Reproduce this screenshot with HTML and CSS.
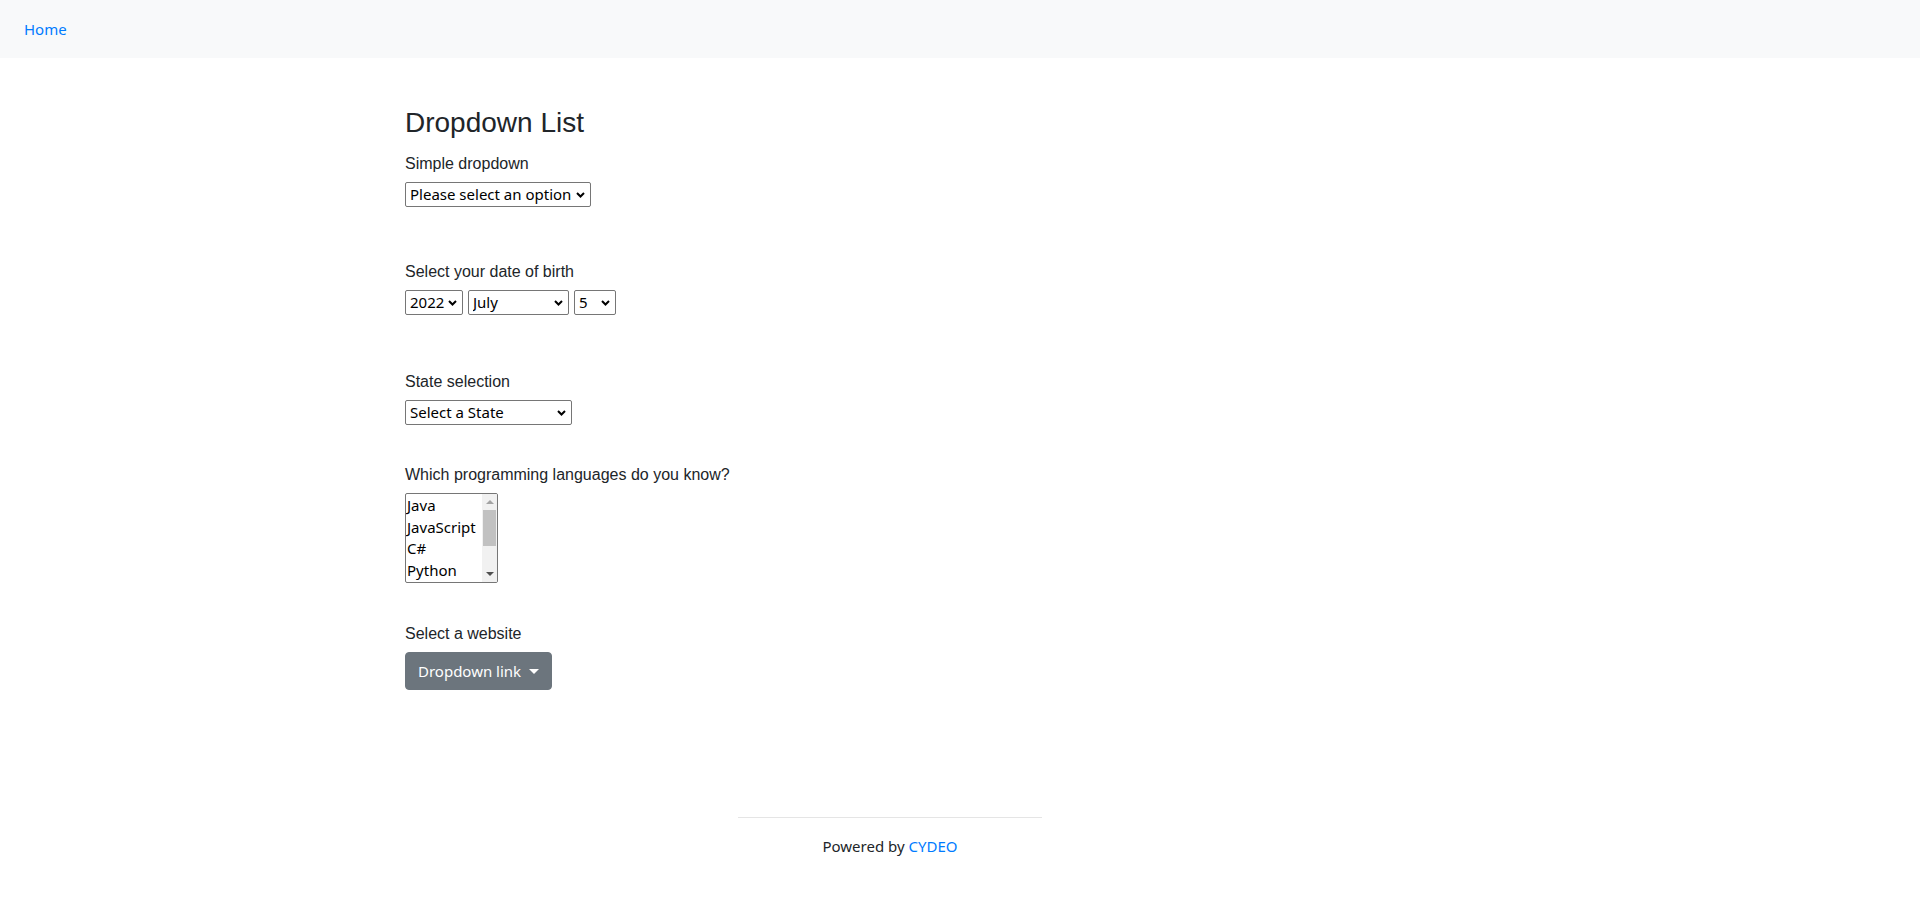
FILE: index.html
```html
<!DOCTYPE html>
<html lang="en">
<head>
<meta charset="utf-8">
<title>Dropdown List</title>
<link rel="stylesheet" href="styles.css">
</head>
<body>
<nav class="navbar"><a class="nav-link" href="#">Home</a></nav>
<div class="container">
  <div class="example">
    <h3 class="title">Dropdown List</h3>

    <div class="group g-simple">
      <label class="lbl" for="dropdown">Simple dropdown</label>
      <select id="dropdown" class="sel sel-simple"><option>Please select an option</option></select>
    </div>

    <div class="group g-date">
      <label class="lbl">Select your date of birth</label>
      <div class="date-row">
        <select class="sel sel-year"><option>2022</option></select>
        <select class="sel sel-month"><option>July</option></select>
        <select class="sel sel-day"><option>5</option></select>
      </div>
    </div>

    <div class="group g-state">
      <label class="lbl" for="state">State selection</label>
      <select id="state" class="sel sel-state"><option>Select a State</option></select>
    </div>

    <div class="group g-lang">
      <label class="lbl">Which programming languages do you know?</label>
      <div class="listbox" role="listbox" aria-multiselectable="true">
        <ul class="options">
          <li role="option">Java</li>
          <li role="option">JavaScript</li>
          <li role="option">C#</li>
          <li role="option">Python</li>
        </ul>
        <div class="scrollbar">
          <span class="arrow arrow-up"></span>
          <span class="thumb"></span>
          <span class="track-fill"></span>
          <span class="arrow arrow-down"></span>
        </div>
      </div>
    </div>

    <div class="group g-web">
      <label class="lbl">Select a website</label>
      <button class="btn-dropdown" type="button">Dropdown link<span class="caret"></span></button>
    </div>
  </div>
</div>

<footer class="footer">
  <hr class="footer-rule">
  <div class="footer-text">Powered by <a class="footer-link" href="#">CYDEO</a></div>
</footer>
</body>
</html>
```

FILE: styles.css
```css
* { box-sizing: border-box; }

html, body {
  margin: 0;
  padding: 0;
  background: #ffffff;
}

body {
  font-family: "Liberation Sans", Arial, sans-serif;
  font-size: 16px;
  line-height: 1.5;
  color: #212529;
}

.navbar {
  height: 58px;
  background: #f8f9fa;
  display: flex;
  align-items: center;
  padding-left: 24px;
}

.nav-link {
  font-family: "Noto Sans", sans-serif;
  font-size: 15px;
  color: #007bff;
  text-decoration: none;
}

.container {
  max-width: 1140px;
  margin: 0 auto;
  padding: 0 15px;
}

.example {
  padding-top: 48px;
  display: flex;
  flex-direction: column;
  align-items: flex-start;
}

.title {
  margin: 0 0 12px;
  font-size: 28px;
  font-weight: 400;
  line-height: 34px;
}

.group {
  display: flex;
  flex-direction: column;
  align-items: flex-start;
}

.g-date { margin-top: 53px; }
.g-state { margin-top: 55px; }
.g-lang { margin-top: 38px; }
.g-web { margin-top: 39px; }

.lbl {
  display: block;
  line-height: 24px;
  margin-bottom: 6px;
}

.sel {
  -webkit-appearance: none;
  appearance: none;
  height: 25px;
  margin: 0;
  padding: 0 13px 0 4px;
  border: 1px solid #767676;
  border-radius: 2px;
  background-color: #ffffff;
  background-image: url("data:image/svg+xml,%3Csvg xmlns='http://www.w3.org/2000/svg' width='9' height='6' viewBox='0 0 9 6'%3E%3Cpath d='M1 1l3.5 3.5 3.5-3.5' fill='none' stroke='%23000' stroke-width='2'/%3E%3C/svg%3E");
  background-repeat: no-repeat;
  background-position: right 5px center;
  background-size: 9px 6px;
  font-family: "Noto Sans", sans-serif;
  font-size: 15px;
  line-height: 21px;
  color: #000000;
}

.sel-simple { width: 186px; }
.sel-year { width: 58px; }
.sel-month { width: 101px; }
.sel-day { width: 42px; }
.sel-state { width: 167px; }

.date-row {
  display: flex;
  gap: 5px;
}

.listbox {
  display: flex;
  width: 93px;
  height: 90px;
  border: 1px solid #767676;
  border-radius: 2px;
  background: #ffffff;
  overflow: hidden;
}

.options {
  list-style: none;
  margin: 0;
  padding: 1px 0 0 1px;
  flex: 1;
  overflow: hidden;
  font-family: "Noto Sans", sans-serif;
  font-size: 15px;
  line-height: 21.5px;
  color: #000000;
  white-space: nowrap;
}

.scrollbar {
  width: 15px;
  flex: none;
  background: #f1f1f1;
  display: flex;
  flex-direction: column;
  align-items: center;
}

.arrow {
  display: block;
  width: 0;
  height: 0;
  border-left: 4px solid transparent;
  border-right: 4px solid transparent;
}

.arrow-up {
  margin-top: 6px;
  border-bottom: 4px solid #a3a3a3;
}

.thumb {
  display: block;
  width: 13px;
  height: 36px;
  margin-top: 6px;
  background: #c1c1c1;
}

.track-fill { flex: 1; }

.arrow-down {
  margin-bottom: 6px;
  border-top: 4px solid #505050;
}

.btn-dropdown {
  display: inline-flex;
  align-items: center;
  height: 38px;
  padding: 0 12px;
  border: 1px solid #6c757d;
  border-radius: 4px;
  background: #6c757d;
  color: #ffffff;
  font-family: "Noto Sans", sans-serif;
  font-size: 15px;
  line-height: 24px;
  cursor: pointer;
}

.caret {
  display: inline-block;
  margin-left: 8px;
  width: 0;
  height: 0;
  border-top: 5px solid #ffffff;
  border-left: 5px solid transparent;
  border-right: 5px solid transparent;
}

.footer {
  width: 304px;
  margin: 127px 0 0 calc(50% - 222px);
}

.footer-rule {
  margin: 0;
  border: 0;
  border-top: 1px solid rgba(0, 0, 0, 0.1);
}

.footer-text {
  margin-top: 16px;
  text-align: center;
  font-family: "Noto Sans", sans-serif;
  font-size: 15px;
  line-height: 24px;
  color: #212529;
}

.footer-link {
  color: #007bff;
  text-decoration: none;
}
```
